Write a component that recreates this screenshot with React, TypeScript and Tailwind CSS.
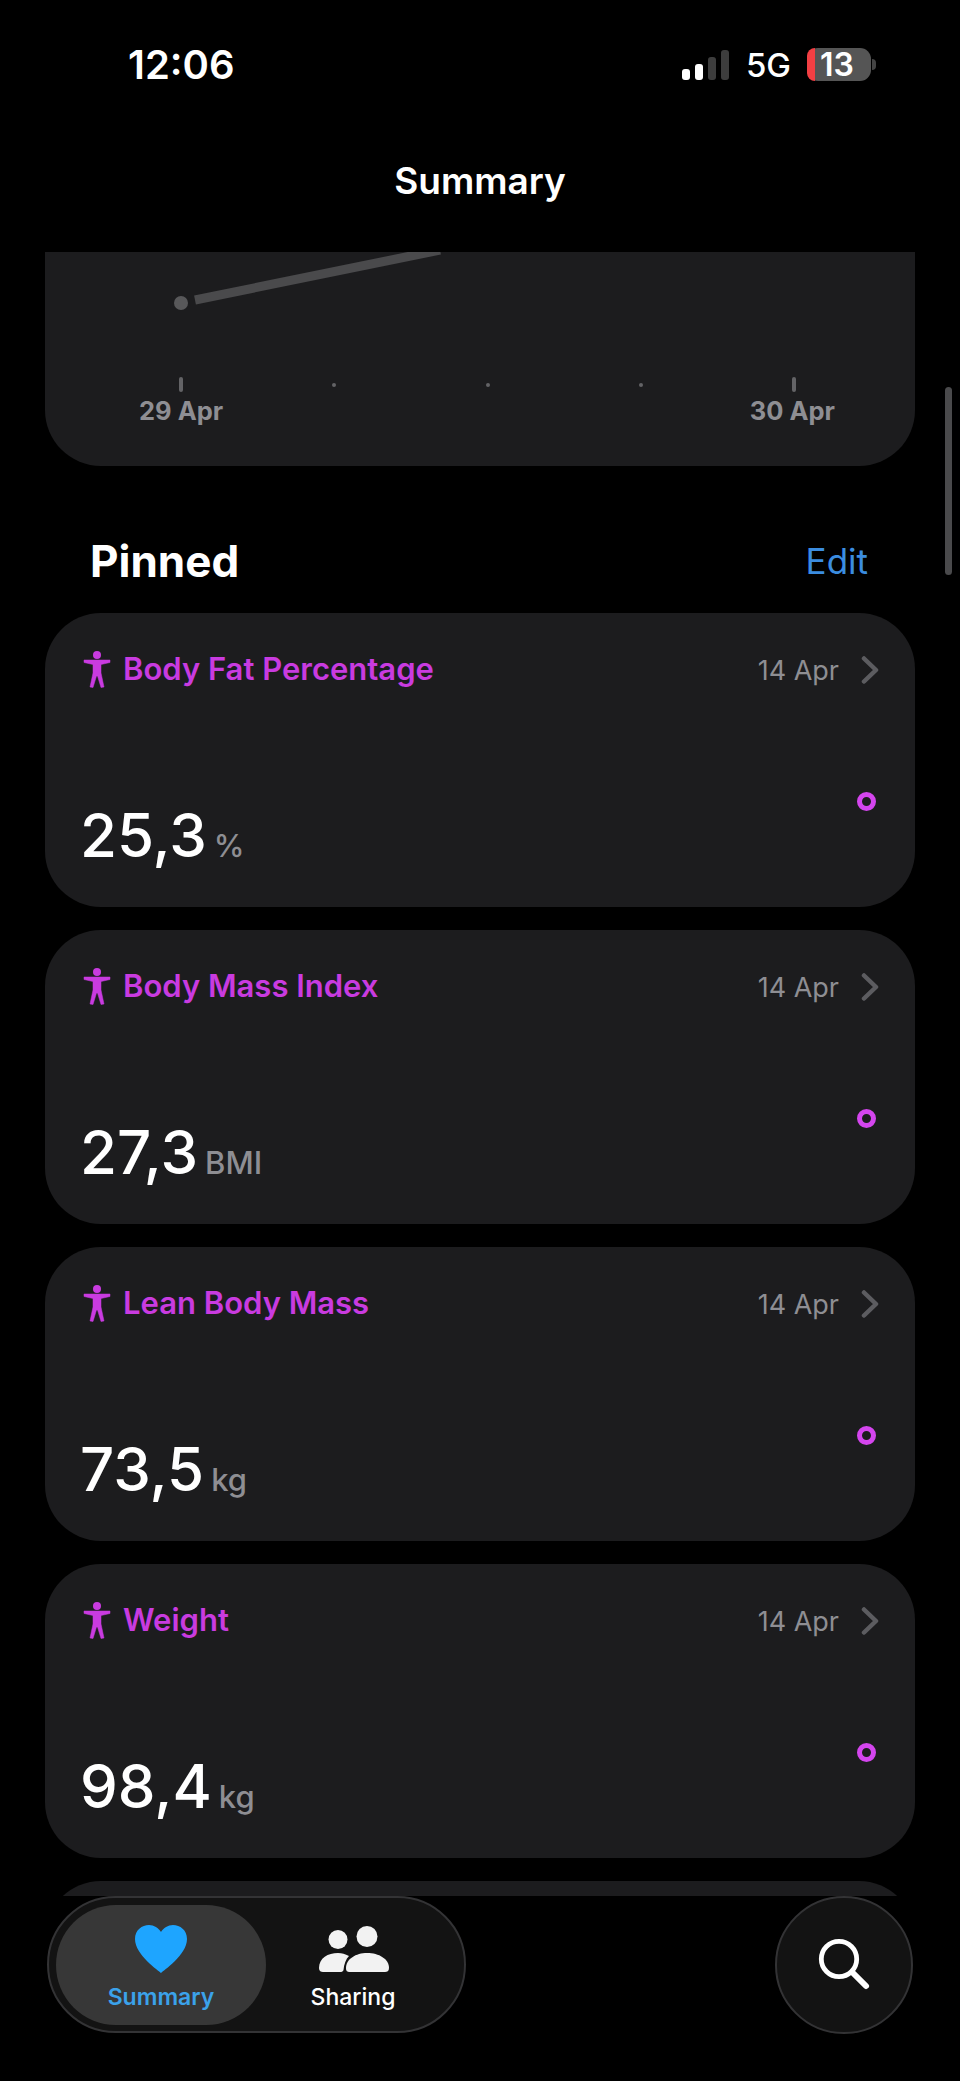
const pinned = [
  { title: "Body Fat Percentage", value: "25,3", unit: "%" },
  { title: "Body Mass Index", value: "27,3", unit: "BMI" },
  { title: "Lean Body Mass", value: "73,5", unit: "kg" },
  { title: "Weight", value: "98,4", unit: "kg" },
];

function BodyIcon() {
  return (
    <svg width="32" height="40" viewBox="0 0 32 40" className="shrink-0">
      <circle cx="16" cy="6" r="4" fill="#c93be0" />
      <path
        d="M3 11 L29 11 L29 13.5 L20 15.5 L20 24 L23 38 L20 38.5 L16.5 27 L15.5 27 L12 38.5 L9 38 L12 24 L12 15.5 L3 13.5 Z"
        fill="#c93be0"
        stroke="#c93be0"
        strokeWidth="0.5"
        strokeLinejoin="round"
      />
    </svg>
  );
}

function PinnedCard({ title, value, unit }: { title: string; value: string; unit: string }) {
  return (
    <div className="h-[294px] shrink-0 rounded-[56px] bg-[#1c1c1e] pl-9 pr-9 pt-9">
      <div className="flex h-10 items-center">
        <BodyIcon />
        <span className="ml-[10px] text-[31px] leading-10 font-semibold text-[#c93be0]">{title}</span>
        <span className="ml-auto mt-[3px] text-[27px] leading-10 text-[#8e8e93]">14 Apr</span>
        <svg width="18" height="28" viewBox="0 0 18 28" className="ml-[22px] mt-[2px] shrink-0" fill="none">
          <path d="M3 2.5 L15 14 L3 25.5" stroke="#5c5c60" strokeWidth="4.5" strokeLinecap="round" strokeLinejoin="round" />
        </svg>
      </div>
      <div className="mt-[116px] flex items-start justify-between">
        <div className="-ml-[1px] flex items-baseline gap-[7px]">
          <span className="text-[60px] leading-[60px] font-medium text-white">{value}</span>
          <span className="text-[31px] leading-[60px] font-medium text-[#8e8e93]">{unit}</span>
        </div>
        <div className="mr-[3px] -mt-[13px] h-[19px] w-[19px] rounded-full border-[5.5px] border-[#d445ee]" />
      </div>
    </div>
  );
}

export default function App() {
  return (
    <div
      className="relative flex h-[2081px] w-[960px] flex-col overflow-hidden bg-black text-white"
      style={{ fontFamily: "Inter, sans-serif" }}
    >
      {/* status bar */}
      <div className="flex h-[130px] shrink-0 items-start justify-between pl-[128px] pr-[84px] pt-[42px]">
        <span className="text-[40px] leading-[46px] font-semibold">12:06</span>
        <div className="mt-[6px] flex items-center">
          <div className="flex h-[31px] items-end gap-[5px]">
            <div className="h-[11px] w-2 rounded-[3px] bg-white" />
            <div className="h-4 w-2 rounded-[3px] bg-white" />
            <div className="h-[23px] w-2 rounded-[3px] bg-[#3d3d3d]" />
            <div className="h-[30px] w-2 rounded-[3px] bg-[#3d3d3d]" />
          </div>
          <span className="ml-[17px] text-[33px] leading-8 font-medium">5G</span>
          <div className="ml-[16px] flex h-[33px] w-[64px] items-center rounded-[11px] bg-[#555555]">
            <div className="h-full w-2 shrink-0 rounded-l-[11px] bg-[#f23f43]" />
            <span className="flex-1 pr-[12px] text-center text-[32px] leading-[33px] font-semibold">13</span>
          </div>
          <div className="ml-[1px] h-[11px] w-1 rounded-r-full bg-[#444444]" />
        </div>
      </div>

      {/* nav title */}
      <div className="flex h-[122px] shrink-0 justify-center pt-[29px]">
        <span className="text-[37px] leading-[44px] font-semibold">Summary</span>
      </div>

      {/* scrolled content */}
      <div className="flex h-[1644px] shrink-0 flex-col overflow-hidden px-[45px]">
        <div className="h-[214px] shrink-0 rounded-b-[56px] bg-[#1c1c1e]">
          <svg width="870" height="143" viewBox="0 0 870 143" className="block">
            <line x1="150" y1="48" x2="395" y2="-2" stroke="#4a4a4c" strokeWidth="9" />
            <circle cx="136" cy="51" r="7" fill="#58585a" />
            <rect x="134" y="125" width="4" height="15" rx="2" fill="#636366" />
            <circle cx="289" cy="133" r="2" fill="#636366" />
            <circle cx="443" cy="133" r="2" fill="#636366" />
            <circle cx="596" cy="133" r="2" fill="#636366" />
            <rect x="747" y="125" width="4" height="15" rx="2" fill="#636366" />
          </svg>
          <div className="flex justify-between pl-[94px] pr-[80px] text-[25.5px] leading-8 font-bold text-[#8e8e93]">
            <span>29 Apr</span>
            <span>30 Apr</span>
          </div>
        </div>

        <div className="flex h-[147px] shrink-0 items-center justify-between pl-[45px] pr-[47px] pt-[42px]">
          <span className="text-[44px] leading-[52px] font-bold">Pinned</span>
          <span className="text-[35px] leading-[52px] text-[#3b8de0]">Edit</span>
        </div>

        <div className="flex flex-col gap-[23px]">
          {pinned.map((item) => (
            <PinnedCard key={item.title} {...item} />
          ))}
          <div className="h-[294px] shrink-0 rounded-[56px] bg-[#1c1c1e]" />
        </div>
      </div>

      {/* tab bar */}
      <div className="flex items-start justify-between pl-[47px] pr-[47px]">
        <div className="flex h-[137px] w-[419px] items-center rounded-full border-2 border-[#333335] bg-[#131313] pl-[7px]">
          <div className="flex h-[120px] w-[210px] flex-col items-center rounded-full bg-[#373737] pt-[20px]">
            <svg width="52" height="48" viewBox="0 0 52 48" fill="#1ea5ff">
              <path d="M26 48 C24 46 0 30 0 14 C0 5 7 0 14 0 C19 0 23.5 3 26 7 C28.5 3 33 0 38 0 C45 0 52 5 52 14 C52 30 28 46 26 48 Z" />
            </svg>
            <span className="mt-[10px] text-[23px] leading-7 font-semibold text-[#3ba2ea]">Summary</span>
          </div>
          <div className="ml-[1px] flex h-[120px] w-[172px] flex-col items-center pt-[20px]">
            <svg width="72" height="48" viewBox="0 0 72 48" fill="#f2f2f2" className="ml-[1px]">
              <circle cx="20" cy="14.5" r="9.5" />
              <circle cx="49" cy="11.5" r="10.5" />
              <path d="M1 43 C1 33 10 28 20 28 C24 28 27 29 31 31 C28 34 26 39 25.5 45 C25 46.5 24 47 22 47 L5 47 C3 47 1 46 1 43 Z" />
              <path d="M28 43 C28 34 38 28 49 28 C61 28 71 34 71 43 C71 46 69 47 67 47 L32 47 C29 47 28 46 28 43 Z" />
            </svg>
            <span className="mt-[10px] text-[23px] leading-7 font-medium text-white">Sharing</span>
          </div>
        </div>
        <div className="flex h-[138px] w-[138px] items-center justify-center rounded-full border-2 border-[#333335] bg-[#131313]">
          <svg width="60" height="60" viewBox="0 0 60 60" fill="none" stroke="white" strokeLinecap="round">
            <circle cx="25" cy="24" r="17.7" strokeWidth="4.8" />
            <line x1="38.5" y1="37.5" x2="52" y2="51" strokeWidth="6" />
          </svg>
        </div>
      </div>

      {/* scroll indicator */}
      <div className="absolute left-[945px] top-[387px] h-[188px] w-[7px] rounded-full bg-[#4a4a4c]" />
    </div>
  );
}
